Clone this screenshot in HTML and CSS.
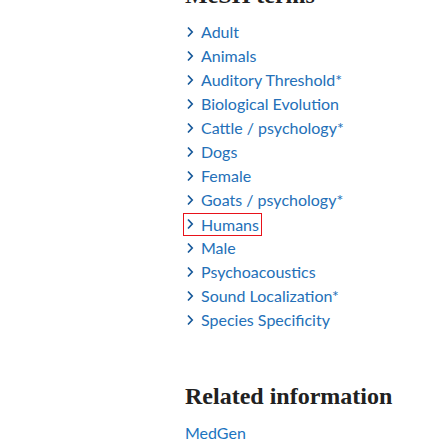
FILE: index.html
```html
<!DOCTYPE html>
<html>
<head>
<meta charset="utf-8">
<link rel="stylesheet" href="styles.css">
</head>
<body>
<div class="page">
  <h2 class="heading heading-top">MeSH terms</h2>
  <ul class="terms">
    <li><a class="term" href="#"><svg class="chev" viewBox="0 0 8 12" width="8" height="12"><path d="M2 1.5 L6.2 6 L2 10.5"/></svg><span>Adult</span></a></li>
    <li><a class="term" href="#"><svg class="chev" viewBox="0 0 8 12" width="8" height="12"><path d="M2 1.5 L6.2 6 L2 10.5"/></svg><span>Animals</span></a></li>
    <li><a class="term" href="#"><svg class="chev" viewBox="0 0 8 12" width="8" height="12"><path d="M2 1.5 L6.2 6 L2 10.5"/></svg><span>Auditory Threshold*</span></a></li>
    <li><a class="term" href="#"><svg class="chev" viewBox="0 0 8 12" width="8" height="12"><path d="M2 1.5 L6.2 6 L2 10.5"/></svg><span>Biological Evolution</span></a></li>
    <li><a class="term" href="#"><svg class="chev" viewBox="0 0 8 12" width="8" height="12"><path d="M2 1.5 L6.2 6 L2 10.5"/></svg><span>Cattle / psychology*</span></a></li>
    <li><a class="term" href="#"><svg class="chev" viewBox="0 0 8 12" width="8" height="12"><path d="M2 1.5 L6.2 6 L2 10.5"/></svg><span>Dogs</span></a></li>
    <li><a class="term" href="#"><svg class="chev" viewBox="0 0 8 12" width="8" height="12"><path d="M2 1.5 L6.2 6 L2 10.5"/></svg><span>Female</span></a></li>
    <li><a class="term" href="#"><svg class="chev" viewBox="0 0 8 12" width="8" height="12"><path d="M2 1.5 L6.2 6 L2 10.5"/></svg><span>Goats / psychology*</span></a></li>
    <li><a class="term term-focus" href="#"><svg class="chev" viewBox="0 0 8 12" width="8" height="12"><path d="M2 1.5 L6.2 6 L2 10.5"/></svg><span>Humans</span></a></li>
    <li><a class="term" href="#"><svg class="chev" viewBox="0 0 8 12" width="8" height="12"><path d="M2 1.5 L6.2 6 L2 10.5"/></svg><span>Male</span></a></li>
    <li><a class="term" href="#"><svg class="chev" viewBox="0 0 8 12" width="8" height="12"><path d="M2 1.5 L6.2 6 L2 10.5"/></svg><span>Psychoacoustics</span></a></li>
    <li><a class="term" href="#"><svg class="chev" viewBox="0 0 8 12" width="8" height="12"><path d="M2 1.5 L6.2 6 L2 10.5"/></svg><span>Sound Localization*</span></a></li>
    <li><a class="term" href="#"><svg class="chev" viewBox="0 0 8 12" width="8" height="12"><path d="M2 1.5 L6.2 6 L2 10.5"/></svg><span>Species Specificity</span></a></li>
  </ul>
  <h2 class="heading heading-related">Related information</h2>
  <a class="link" href="#">MedGen</a>
</div>
</body>
</html>
```
FILE: styles.css
```css
html, body {
  margin: 0;
  padding: 0;
  background: #ffffff;
  overflow: hidden;
}

.page {
  padding-left: 183px;
  font-family: "Lato", "Open Sans", sans-serif;
}

.heading {
  font-family: "Liberation Serif", "DejaVu Serif", serif;
  font-weight: bold;
  font-size: 24px;
  line-height: 28px;
  color: #212121;
  margin: 0;
  padding-left: 2px;
}

.heading-top {
  margin-top: -19px;
}

.terms {
  list-style: none;
  margin: 11px 0 0 0;
  padding: 0;
}

.terms li {
  display: flex;
  height: 24px;
}

.term {
  display: flex;
  align-items: center;
  height: 24px;
  padding: 0 3px;
  box-sizing: border-box;
  text-decoration: none;
  color: #2470b8;
  font-size: 16px;
  line-height: 24px;
}

.chev {
  flex: none;
  margin-top: -1px;
}

.chev path {
  fill: none;
  stroke: #17599a;
  stroke-width: 1.7;
}

.term span {
  margin-left: 7px;
}

.term-focus {
  height: 23px;
  margin-top: 1px;
  border: 1px solid #e8121a;
  padding-left: 2px;
  padding-right: 2px;
}

.heading-related {
  margin-top: 50px;
}

.link {
  display: block;
  margin-top: 11px;
  padding-left: 2px;
  font-size: 16px;
  line-height: 24px;
  color: #1c74c0;
  text-decoration: none;
}
```
